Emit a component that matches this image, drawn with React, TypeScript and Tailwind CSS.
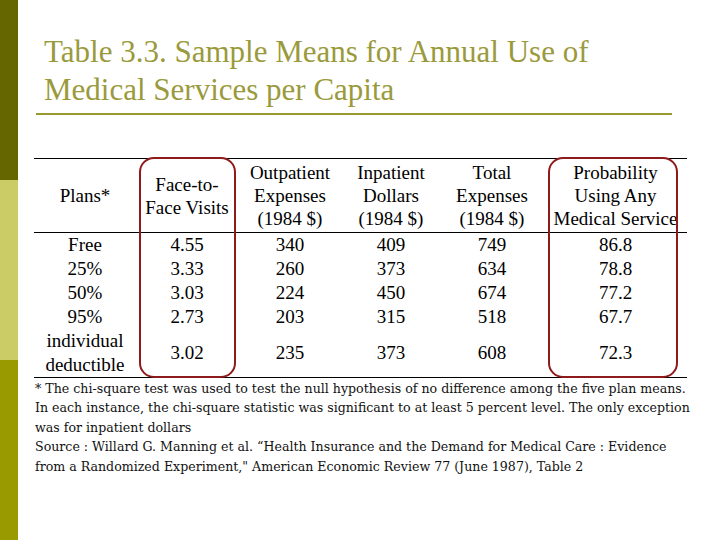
const headers = [
  ["Plans*"],
  ["Face-to-", "Face Visits"],
  ["Outpatient", "Expenses", "(1984 $)"],
  ["Inpatient", "Dollars", "(1984 $)"],
  ["Total", "Expenses", "(1984 $)"],
  ["Probability", "Using Any", "Medical Service"],
];

const rows: string[][] = [
  ["Free", "4.55", "340", "409", "749", "86.8"],
  ["25%", "3.33", "260", "373", "634", "78.8"],
  ["50%", "3.03", "224", "450", "674", "77.2"],
  ["95%", "2.73", "203", "315", "518", "67.7"],
];

const widths = ["w-[102px]", "w-[102px]", "w-[104px]", "w-[98px]", "w-[104px]", "w-[143px]"];

export default function App() {
  return (
    <div className="w-[720px] h-[540px] flex bg-white overflow-hidden font-['Liberation_Serif',serif]">
      <div className="w-[18px] flex flex-col shrink-0">
        <div className="h-[180px] bg-[#666600]" />
        <div className="h-[180px] bg-[#cccc66]" />
        <div className="flex-1 bg-[#999900]" />
      </div>

      <div className="flex-1 pl-[16px] pt-[33px]">
        <h1 className="pl-[10px] text-[31px] leading-[38px] text-[#9a9a3c] font-normal whitespace-nowrap">
          Table 3.3. Sample Means for Annual Use of
          <br />
          Medical Services per Capita
        </h1>
        <div className="ml-[2px] mt-[4px] h-[2px] w-[636px] bg-[#999933]" />

        <div className="relative mt-[43px] w-[653px]">
          <table className="table-fixed border-collapse text-[19px] text-black">
            <thead>
              <tr className="border-t border-b border-black">
                {headers.map((h, i) => (
                  <th key={i} className={`${widths[i]} font-normal text-center align-middle leading-[23px] pt-[2px] pb-[2px] whitespace-nowrap`}>
                    {h.map((l) => (
                      <div key={l}>{l}</div>
                    ))}
                  </th>
                ))}
              </tr>
            </thead>
            <tbody>
              {rows.map((r) => (
                <tr key={r[0]}>
                  {r.map((c, i) => (
                    <td key={i} className="text-center leading-[24px] p-0">
                      {c}
                    </td>
                  ))}
                </tr>
              ))}
              <tr className="border-b border-black">
                <td className="text-center leading-[24px] p-0">
                  individual
                  <br />
                  deductible
                </td>
                {["3.02", "235", "373", "608", "72.3"].map((c, i) => (
                  <td key={i} className="text-center align-middle leading-[24px] p-0">
                    {c}
                  </td>
                ))}
              </tr>
            </tbody>
          </table>

          <div className="absolute left-[105px] top-[-1px] w-[97px] h-[221px] border-2 border-[#8e1b1b] rounded-[15px]" />
          <div className="absolute left-[514px] top-[-1px] w-[130px] h-[221px] border-2 border-[#8e1b1b] rounded-[15px]" />
        </div>

        <p className="font-['DejaVu_Serif',serif] text-[12.6px] leading-[19.4px] text-[#111] whitespace-nowrap pt-[1px] pl-[1px]">
          * The chi-square test was used to test the null hypothesis of no difference among the five plan means.
          <br />
          In each instance, the chi-square statistic was significant to at least 5 percent level. The only exception
          <br />
          was for inpatient dollars
          <br />
          Source : Willard G. Manning et al. “Health Insurance and the Demand for Medical Care : Evidence
          <br />
          from a Randomized Experiment," American Economic Review 77 (June 1987), Table 2
        </p>
      </div>
    </div>
  );
}
